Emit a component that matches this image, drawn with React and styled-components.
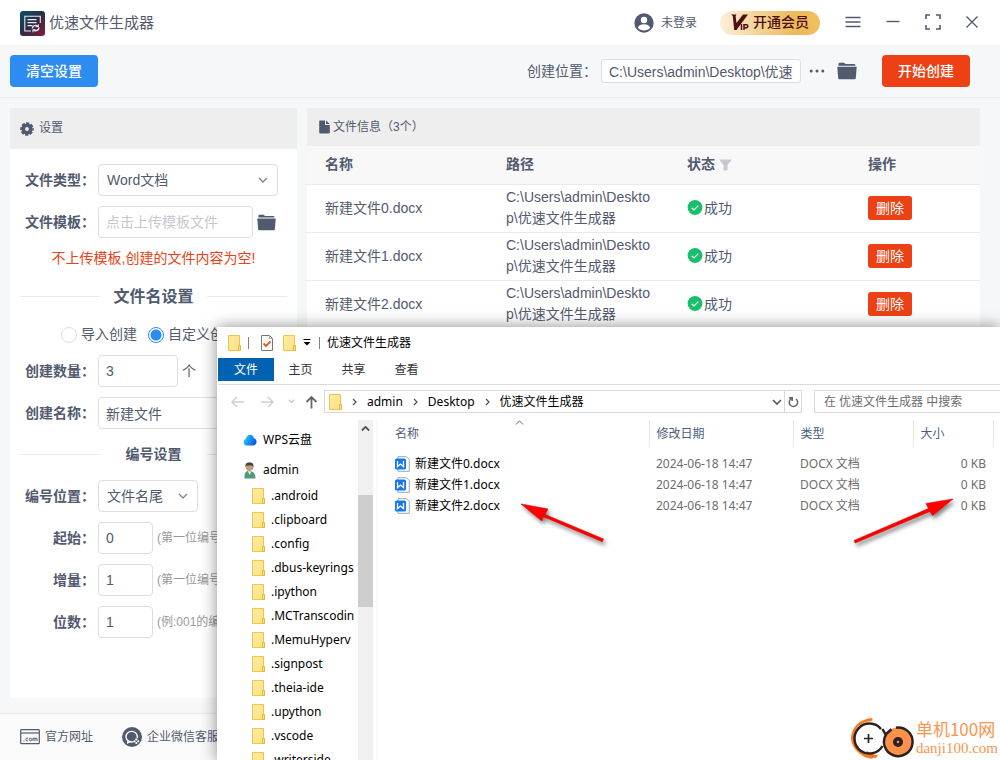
import React from "react";
import styled, { createGlobalStyle } from "styled-components";

const GlobalStyle = createGlobalStyle`
  *, *::before, *::after { box-sizing: border-box; }
  body {
    margin: 0;
    background: #f5f7f9;
    color: #515a6e;
    font: 14px/21px "Liberation Sans", "Noto Sans CJK SC", sans-serif;
  }
  button, input, select { font: inherit; color: inherit; margin: 0; }
  button { border: 0; padding: 0; background: none; cursor: pointer; }
  svg { display: block; flex: none; }
`;

/* ---------- application shell ---------- */

const Desktop = styled.div`
  position: relative;
  display: flex;
  flex-direction: column;
  min-height: 100vh;
  overflow: hidden;
`;

const TitleBar = styled.header`
  display: flex;
  align-items: center;
  height: 45px;
  padding: 0 22px 0 20px;
  background: #fff;
`;

const Brand = styled.div`
  display: flex;
  align-items: center;
  gap: 4px;
  margin-right: auto;
  padding-top: 2px;
`;

const BrandName = styled.h1`
  margin: 0;
  padding-bottom: 2px;
  font-size: 15px;
  line-height: 24px;
  font-weight: 400;
`;

const LoginButton = styled.button`
  display: flex;
  align-items: center;
  gap: 7px;
  margin-right: 23px;
  font-size: 12px;
  line-height: 24px;
`;

const VipButton = styled.button`
  display: flex;
  align-items: center;
  gap: 4px;
  width: 100px;
  height: 24px;
  padding-left: 11px;
  margin-right: 25px;
  border-radius: 12px;
  background: linear-gradient(90deg, #fbefdb, #f2cf8a 45%, #edb959 75%, #f0c060);
  color: #4d0f12;
  font-size: 14px;
  font-weight: 500;
  white-space: nowrap;
`;

const WindowActions = styled.div`
  display: flex;
  align-items: center;
  gap: 25px;
`;

const IconButton = styled.button`
  display: flex;
  align-items: center;
  justify-content: center;
  flex: none;
`;

const HistoryButton = styled(IconButton)`
  margin-left: auto;
`;

const Toolbar = styled.div`
  display: flex;
  align-items: center;
  height: 53px;
  padding: 0 30px 0 10px;
  border-bottom: 1px solid #e8eaec;
  background: #f5f7f9;
`;

const ActionButton = styled.button`
  width: 88px;
  height: 32px;
  border-radius: 4px;
  background: ${(p) => (p.$danger ? "#ed4014" : "#2d8cf0")};
  color: #fff;
  font-weight: 500;
`;

const PathGroup = styled.div`
  display: flex;
  align-items: center;
  margin-left: auto;
  margin-right: 25px;
`;

const PathInput = styled.input`
  width: 200px;
  height: 24px;
  margin: 0 8px 0 4px;
  padding: 0 7px;
  border: 1px solid #dcdee2;
  border-radius: 3px;
  background: #fff;
  outline: 0;
`;

const Main = styled.main`
  display: flex;
  flex: 1;
  gap: 10px;
  padding: 10px 20px 15px 10px;
`;

const Panel = styled.section`
  flex: ${(p) => (p.$side ? "0 0 287px" : "1 1 0")};
  min-width: 0;
  background: #fff;
`;

const PanelHeader = styled.h2`
  display: flex;
  align-items: center;
  gap: ${(p) => (p.$tall ? "5px" : "3px")};
  height: ${(p) => (p.$tall ? "41px" : "38px")};
  margin: 0;
  padding: 0 ${(p) => (p.$tall ? "10px" : "12px")};
  background: #eee;
  font-size: 12px;
  font-weight: 400;
`;

/* ---------- settings form ---------- */

const Form = styled.form`
  display: flex;
  flex-direction: column;
  gap: 10px;
  padding: 15px 10px;
`;

const Field = styled.div`
  display: flex;
  align-items: center;
  height: 32px;
`;

const FieldLabel = styled.label`
  flex: none;
  width: 75px;
  margin-right: 3px;
  text-align: right;
  font-weight: 700;
`;

const TextInput = styled.input`
  width: ${(p) => p.$width}px;
  height: 32px;
  padding: 0 7px;
  border: 1px solid #dcdee2;
  border-radius: 4px;
  background: #fff;
  outline: 0;
  &::placeholder { color: #c5c8ce; opacity: 1; }
`;

const SelectBox = styled.div`
  position: relative;
  width: ${(p) => p.$width}px;
  svg { position: absolute; right: 10px; top: 13px; pointer-events: none; }
`;

const Select = styled.select`
  width: 100%;
  height: 32px;
  padding: 0 8px;
  border: 1px solid #dcdee2;
  border-radius: 4px;
  background: #fff;
  appearance: none;
`;

const After = styled.span`
  margin-left: 4px;
  white-space: nowrap;
`;

const Hint = styled.span`
  margin-left: 4px;
  color: #999;
  font-size: 12px;
  white-space: nowrap;
`;

const Warning = styled.p`
  margin: 0;
  height: 20px;
  line-height: 20px;
  text-align: center;
  color: #ed4014;
`;

const Divider = styled.h3`
  display: flex;
  align-items: center;
  justify-content: space-between;
  height: ${(p) => (p.$large ? "36px" : "31px")};
  margin: 0;
  font-size: ${(p) => (p.$large ? "16px" : "14px")};
  font-weight: 700;
  &::before, &::after { content: ""; width: 80px; height: 1px; background: #e8eaec; }
`;

const RadioRow = styled.div`
  display: flex;
  align-items: center;
  gap: 11px;
  height: 21px;
  padding-left: 41px;
  white-space: nowrap;
`;

const RadioLabel = styled.label`
  display: flex;
  align-items: center;
  gap: 4px;
`;

const Radio = styled.input`
  appearance: none;
  width: 16px;
  height: 16px;
  border: 1px solid #dcdee2;
  border-radius: 50%;
  background: #fff;
  &:checked {
    border-color: #2d8cf0;
    background: radial-gradient(circle, #2d8cf0 5px, #fff 6px);
  }
`;

/* ---------- file information table ---------- */

const InfoTable = styled.table`
  width: 100%;
  table-layout: fixed;
  border-collapse: collapse;
  th, td { padding: 0 18px; text-align: left; border-bottom: 1px solid #e8eaec; }
  th { height: 38px; background: #f8f8f9; font-weight: 700; }
  td { height: 48px; word-break: break-all; }
`;

const InfoColumn = styled.col`
  width: ${(p) => (p.$rest ? "auto" : "181px")};
`;

const Inline = styled.span`
  display: flex;
  align-items: center;
  gap: ${(p) => p.$gap || 1}px;
`;

const DeleteButton = styled.button`
  width: 44px;
  height: 24px;
  border-radius: 3px;
  background: #ed4014;
  color: #fff;
`;

const Footer = styled.footer`
  display: flex;
  align-items: center;
  gap: 29px;
  height: 47px;
  padding: 0 20px;
  border-top: 1px solid #e8eaec;
  background: #fafafa;
`;

const FooterLink = styled.a`
  display: flex;
  align-items: center;
  gap: 5px;
  color: inherit;
  font-size: 12px;
  text-decoration: none;
`;

/* ---------- explorer window ---------- */

const Explorer = styled.section`
  position: absolute;
  left: 217px;
  top: 327px;
  right: 0;
  bottom: 0;
  display: flex;
  flex-direction: column;
  padding-left: 1px;
  overflow: hidden;
  background: #fff;
  box-shadow: 0 0 15px rgba(0, 0, 0, 0.45);
  color: #000;
  font: 12px/18px "Noto Sans", "Noto Sans CJK SC", sans-serif;
`;

const Caption = styled.div`
  display: flex;
  align-items: center;
  flex: none;
  gap: 7px;
  height: 31px;
  padding-left: 10px;
`;

const CaptionBar = styled.span`
  width: 1px;
  height: 12px;
  background: #808080;
`;

const CaptionTools = styled.span`
  display: flex;
  align-items: center;
  gap: ${(p) => (p.$wide ? "10px" : "8px")};
  padding-left: ${(p) => (p.$wide ? "5px" : "0")};
`;

const Tabs = styled.nav`
  display: flex;
  flex: none;
  height: 27px;
  padding-bottom: 3px;
  border-bottom: 1px solid #dadbdc;
`;

const Tab = styled.button`
  width: ${(p) => (p.$active ? "56px" : "53px")};
  height: 23px;
  padding-top: 1px;
  background: ${(p) => (p.$active ? "#0063b1" : "transparent")};
  color: ${(p) => (p.$active ? "#fff" : "#333")};
`;

const AddressRow = styled.div`
  display: flex;
  align-items: center;
  flex: none;
  height: 33px;
  margin-bottom: 2px;
  padding-left: 6px;
`;

const NavButtons = styled.div`
  display: grid;
  grid-template-columns: 26px 34px 14px 26px;
  align-items: center;
`;

const AddressBox = styled.div`
  display: flex;
  align-items: center;
  flex: 1;
  height: 23px;
  padding-left: 4px;
  margin-right: 12px;
  border: 1px solid #d9d9d9;
`;

const Crumb = styled.button`
  white-space: nowrap;
`;

const CrumbArrow = styled.span`
  display: flex;
  justify-content: center;
  width: 25px;
`;

const RefreshButton = styled.button`
  display: flex;
  align-items: center;
  justify-content: center;
  width: 17px;
  height: 21px;
  margin-left: 2px;
  border-left: 1px solid #d9d9d9;
`;

const SearchInput = styled.input`
  width: 186px;
  height: 23px;
  padding: 0 9px;
  border: 1px solid #d9d9d9;
  border-right: 0;
  background: #fff;
  outline: 0;
  &::placeholder { color: #6d6d6d; opacity: 1; }
`;

const ExplorerBody = styled.div`
  display: flex;
  flex: 1;
  min-height: 0;
`;

const Tree = styled.ul`
  flex: 0 0 140px;
  margin: 0;
  padding: 4px 0 0;
  overflow: hidden;
  list-style: none;
`;

const TreeItem = styled.li`
  display: flex;
  align-items: center;
  gap: 6px;
  height: ${(p) => p.$height || 24}px;
  padding-left: ${(p) => (p.$height ? "25px" : "34px")};
  white-space: nowrap;
`;

const ScrollTrack = styled.div`
  display: flex;
  flex-direction: column;
  flex: 0 0 15px;
  gap: 57px;
  background: #f0f0f0;
`;

const ScrollUp = styled.button`
  display: flex;
  align-items: center;
  justify-content: center;
  height: 18px;
`;

const ScrollThumb = styled.div`
  height: 112px;
  background: #cdcdcd;
`;

const FileArea = styled.div`
  position: relative;
  flex: 1;
  margin-left: 3px;
  border-left: 1px solid #f5f5f5;
`;

const SortMark = styled.span`
  position: absolute;
  left: 138px;
  top: 0;
`;

const FileTable = styled.table`
  width: 100%;
  table-layout: fixed;
  border-collapse: collapse;
  th, td { padding: 0 0 0 7px; text-align: left; white-space: nowrap; }
  th { height: 27px; color: #4c607a; font-weight: 400; border-right: 1px solid #e5e5e5; }
  th:first-child, td:first-child { padding-left: 18px; }
  th:last-child { border-right: 0; }
  td { height: 21px; color: #6d6d6d; }
  td:first-child { color: #000; }
  tbody::before { content: ""; display: table-row; height: 6px; }
`;

const FileColumn = styled.col`
  width: ${(p) => (p.$width ? `${p.$width}px` : "auto")};
`;

const SizeCell = styled.td`
  && { padding-right: 7px; text-align: right; }
`;

/* ---------- overlays ---------- */

const Pointer = styled.svg`
  position: absolute;
  left: ${(p) => p.$left}px;
  top: ${(p) => p.$top}px;
  overflow: visible;
  filter: drop-shadow(2px 3px 2px rgba(0, 0, 0, 0.5));
`;

const SiteMark = styled.div`
  position: absolute;
  right: 2px;
  bottom: 0;
  display: flex;
  align-items: center;
  gap: 2px;
  color: #fd9350;
`;

const SiteText = styled.div`
  display: flex;
  flex-direction: column;
  font: 400 17px/20px "Noto Sans CJK SC", sans-serif;
  small { font: 15px/18px "Liberation Serif", serif; }
`;

/* ---------- icons ---------- */

const ink = "#515a6e";

const LogoIcon = () => (
  <svg width="25" height="25" viewBox="0 0 25 25">
    <defs>
      <linearGradient id="logo" x1="0" y1="0" x2="1" y2="1">
        <stop offset="0" stopColor="#0b5368" />
        <stop offset="0.5" stopColor="#2a2c45" />
        <stop offset="1" stopColor="#8b1c3c" />
      </linearGradient>
    </defs>
    <rect width="25" height="25" rx="3" fill="url(#logo)" />
    <g fill="none" stroke="#e8e9ee" strokeWidth="1.1">
      <path d="M20.300 12V5.300H4.800V20H11M7.500 8.600h9M7.500 11.600h9M7.500 14.600h5" />
      <path d="M12.300 17.500a3.400 3.400 0 0 1 5.500-2.300M19 16.500a3.400 3.400 0 0 1-5.300 2.700" strokeWidth="1.400" />
      <path d="M18.300 13.200v2.500h-2.500M13 21.300v-2.600h2.500" />
    </g>
  </svg>
);

const UserIcon = () => (
  <svg width="20" height="20" viewBox="0 0 20 20">
    <circle cx="10" cy="10" r="9.700" fill={ink} />
    <circle cx="10" cy="7" r="3.200" fill="#fff" />
    <path d="M3.800 14.700c1.500-4.600 10.900-4.600 12.400 0-3 3.700-9.400 3.700-12.400 0z" fill="#fff" />
  </svg>
);

const VipIcon = () => (
  <svg width="18" height="17" viewBox="0 0 18 17" fill="none" stroke="#4d0f12">
    <path d="M0 .5h5.500L4.600 2l.9 7L12 .5h5L5.500 16H3.200L1.800 2z" fill="#4d0f12" stroke="none" />
    <path d="M10.500 10v6M13 16v-5.300h2.300a1.500 1.500 0 0 1 0 3H13" strokeWidth="1.500" />
  </svg>
);

const MenuIcon = () => (
  <svg width="16" height="14" viewBox="0 0 16 14" stroke={ink} strokeWidth="1.500">
    <path d="M0.500 1.500h15M0.500 6h15M0.500 10.500h15" />
  </svg>
);

const MinusIcon = () => (
  <svg width="14" height="14" viewBox="0 0 14 14" stroke={ink} strokeWidth="1.400">
    <path d="M0.500 5.500h13" />
  </svg>
);

const FullIcon = () => (
  <svg width="16" height="18" viewBox="0 0 16 18" fill="none" stroke={ink} strokeWidth="1.600">
    <path d="M1 5V1h4M11 1h4v4M15 11v4h-4M5 15H1v-4" />
  </svg>
);

const CloseIcon = () => (
  <svg width="12" height="14" viewBox="0 0 12 14" stroke={ink} strokeWidth="1.400">
    <path d="M.5.500l11 11M11.500.500l-11 11" />
  </svg>
);

const DotsIcon = () => (
  <svg width="16" height="4" viewBox="0 0 16 4" fill={ink}>
    <circle cx="2.200" cy="2" r="1.500" />
    <circle cx="8" cy="2" r="1.500" />
    <circle cx="13.800" cy="2" r="1.500" />
  </svg>
);

const SolidFolder = ({ width = 20, height = 18 }) => (
  <svg width={width} height={height} viewBox="0 0 20 18" fill={ink} preserveAspectRatio="none">
    <path d="M1.500 3.200V2Q1.500.800 2.700.800H7l1.500 1.200h8.700q1.200 0 1.200 1.200v.6H1.500z" />
    <path d="M.3 4.800h19.400l-.9 11.400q-.1 1-1.200 1H2.300q-1 0-1.100-1z" />
  </svg>
);

const GearIcon = () => (
  <svg width="14" height="14" viewBox="0 0 14 14" fill="none" stroke={ink}>
    <circle cx="7" cy="7" r="3.700" strokeWidth="3.600" />
    <circle cx="7" cy="7" r="5.700" strokeWidth="2.200" strokeDasharray="3.100 1.377" strokeDashoffset="1.550" />
  </svg>
);

const PageIcon = () => (
  <svg width="11" height="14" viewBox="0 0 11 14" fill={ink}>
    <path d="M1 .5h5V5h4.800v7.500q0 1-1 1H1.200q-1 0-1-1v-11Q.2.500 1 .5zM7 .5L10.800 4H7z" />
  </svg>
);

const Chevron = ({ size = 10, color = "#808695", d = "M1 1l4 4 4-4", weight = 1.3 }) => (
  <svg width={size} height={size * 0.6} viewBox="0 0 10 6" fill="none" stroke={color} strokeWidth={weight}>
    <path d={d} />
  </svg>
);

const FilterIcon = () => (
  <svg width="13" height="12" viewBox="0 0 13 12" fill="#c5c8ce">
    <path d="M0 .5h13L8.500 6v5.500h-4V6z" />
  </svg>
);

const OkIcon = () => (
  <svg width="16" height="16" viewBox="0 0 16 16">
    <circle cx="8" cy="7.500" r="7.400" fill="#19be6b" />
    <path d="M4.700 7.800l2.300 2.200 4.300-4.300" fill="none" stroke="#fff" strokeWidth="1.100" />
  </svg>
);

const SiteIcon = () => (
  <svg width="20" height="16" viewBox="0 0 20 16" fill="none" stroke={ink}>
    <rect x=".7" y=".7" width="18.600" height="14" rx=".8" strokeWidth="1.200" />
    <path d="M1 4h18" strokeWidth="1.200" />
    <path d="M3.500 12h1M8 9.300a1.400 1.400 0 1 0 0 2.300M13 12V9M15 12V9.500M17 12V9.500M13 9.300h4" />
    <circle cx="10.500" cy="10.500" r="1.300" />
  </svg>
);

const ServiceIcon = () => (
  <svg width="20" height="20" viewBox="0 0 20 20" fill="none" stroke="#fff">
    <circle cx="10" cy="10" r="10" fill={ink} stroke="none" />
    <path d="M15.200 11a5.700 5.300 0 1 0-3.700 3.700" strokeWidth="1.400" />
    <path d="M6.200 13.300l-.6 2.600 2.700-1.200" strokeWidth="1.200" />
    <g fill="#fff" stroke="none">
      <circle cx="14.300" cy="12.400" r="1.100" />
      <circle cx="16.200" cy="14.300" r="1.100" />
      <circle cx="14.300" cy="16" r="1.100" />
      <circle cx="12.500" cy="14.300" r="1.100" />
    </g>
  </svg>
);

const FolderIcon = () => (
  <svg width="13" height="16" viewBox="0 0 13 16">
    <defs>
      <linearGradient id="folder" x1="0" y1="0" x2="1" y2="1">
        <stop offset="0" stopColor="#ffeaa0" />
        <stop offset="1" stopColor="#ffe184" />
      </linearGradient>
    </defs>
    <path d="M.5.500h11v10h1v5H.5z" fill="url(#folder)" stroke="#ecc64c" />
    <path d="M10.500 15.500v-5h2v5z" fill="#ffe184" stroke="#e4b93c" />
  </svg>
);

const CheckDocIcon = () => (
  <svg width="12" height="16" viewBox="0 0 12 16">
    <path d="M.5.500h8l3 3v12H.5z" fill="#fafafa" stroke="#777" />
    <path d="M8.500.500v3h3" fill="none" stroke="#aaa" />
    <path d="M2.500 8.500L5 11l4.500-4.500" fill="none" stroke="#e8571e" strokeWidth="1.800" />
  </svg>
);

const QuickIcon = () => (
  <svg width="8" height="7" viewBox="0 0 8 7">
    <path d="M.5.500h7" stroke="#000" />
    <path d="M.5 3h7L4 6.500z" />
  </svg>
);

const NavArrow = ({ d, color = "#d0d0d0", weight = 1.5 }) => (
  <svg width="13" height="14" viewBox="0 0 13 14" fill="none" stroke={color} strokeWidth={weight}>
    <path d={d} />
  </svg>
);

const SideArrow = () => (
  <svg width="5" height="8" viewBox="0 0 5 8" fill="none" stroke="#555" strokeWidth="1.300">
    <path d="M1 1l3 3-3 3" />
  </svg>
);

const RefreshIcon = () => (
  <svg width="11" height="12" viewBox="0 0 11 12" fill="none" stroke="#666" strokeWidth="1.500">
    <path d="M3.300 2.700A4.200 4.200 0 1 0 8 3M1 1.800h3.200V5" />
  </svg>
);

const CloudIcon = () => (
  <svg width="14" height="12" viewBox="0 0 14 12">
    <defs>
      <linearGradient id="cloud" x1="0" y1="0.300" x2="1" y2="0.700">
        <stop offset="0" stopColor="#2ad0f5" />
        <stop offset="0.500" stopColor="#168df5" />
        <stop offset="1" stopColor="#0b4fd8" />
      </linearGradient>
    </defs>
    <path d="M3.500 11.500a3.500 3.500 0 0 1-.7-6.700C4 0 9.500-.7 11 4.300a3.700 3.700 0 0 1-.7 7.200z" fill="url(#cloud)" />
  </svg>
);

const PersonIcon = () => (
  <svg width="14" height="17" viewBox="0 0 14 17">
    <path d="M1.500 16.500c-.5-6 1.500-7.500 4.500-7.500 4 0 6.500 2 6.500 7.500z" fill="#4f9a78" />
    <path d="M4.800 9.300h3.400L6.700 13z" fill="#f3f3f3" />
    <circle cx="6.500" cy="5.300" r="3.700" fill="#c69b78" />
    <path d="M2.500 5C2 .5 5 .3 6.800.5c3 0 4.300 2 3.400 5L9 3.500H4z" fill="#45403c" />
  </svg>
);

const WordIcon = () => (
  <svg width="15" height="16" viewBox="0 0 15 16" fill="none">
    <path d="M3 .7h8.500l2.800 2.800v11.800H3z" fill="#fff" stroke="#9aa5b8" />
    <rect y="2.500" width="11" height="11" rx="1.500" fill="#1677f2" />
    <path d="M2.500 5v5.500L5.500 8l3 2.500V5" stroke="#fff" strokeWidth="1.300" />
  </svg>
);

const MarkIcon = () => (
  <svg width="63" height="44" viewBox="0 0 63 44" fill="none">
    <path d="M21 3.500Q4 5 1.200 21q0 9 8 15.500 7 5.500 13 4.500" stroke="#ff7a1a" strokeWidth="2.500" />
    <path d="M10 7Q16 1 22 2.500l-2 3q-5-1-9 2z" fill="#ff7a1a" />
    <path d="M13 37q5 5 12 5l2-3q-6 0-11-4z" fill="#ff7a1a" />
    <path d="M30 13A15 15 0 1 0 31.500 30" stroke="#2b2226" strokeWidth="2.500" />
    <path d="M13 22.500h9M17.500 18v9" stroke="#2b2226" strokeWidth="1.700" />
    <circle cx="47" cy="26" r="14.500" fill="#ff9248" />
    <path d="M45 11.700a14.300 14.300 0 1 1-9.500 6l5-4.500M31.500 13l3 5.500" stroke="#2b2226" strokeWidth="2.500" />
    <circle cx="47" cy="26" r="5" fill="#2b2226" />
    <circle cx="47" cy="26" r="1.300" fill="#ff9248" />
  </svg>
);

/* ---------- data ---------- */

const files = ["新建文件0.docx", "新建文件1.docx", "新建文件2.docx"];

const folders = [
  ".android", ".clipboard", ".config", ".dbus-keyrings", ".ipython",
  ".MCTranscodin", ".MemuHyperv", ".signpost", ".theia-ide", ".upython",
  ".vscode", ".writerside",
];

const numbering = [
  { id: "start", label: "起始：", value: "0", hint: "(第一位编号)" },
  { id: "step", label: "增量：", value: "1", hint: "(第一位编号)" },
  { id: "digits", label: "位数：", value: "1", hint: "(例:001的编号)" },
];

/* ---------- views ---------- */

const SettingsPanel = () => (
  <Panel $side>
    <PanelHeader $tall><GearIcon />设置</PanelHeader>
    <Form onSubmit={(e) => e.preventDefault()}>
      <Field>
        <FieldLabel htmlFor="type">文件类型：</FieldLabel>
        <SelectBox $width={180}>
          <Select id="type"><option>Word文档</option></Select>
          <Chevron />
        </SelectBox>
      </Field>
      <Field>
        <FieldLabel htmlFor="template">文件模板：</FieldLabel>
        <TextInput id="template" $width={155} placeholder="点击上传模板文件" />
        <After><IconButton type="button" aria-label="选择模板"><SolidFolder width={19} height={17} /></IconButton></After>
      </Field>
      <Warning>不上传模板,创建的文件内容为空!</Warning>
      <Divider $large>文件名设置</Divider>
      <RadioRow>
        <RadioLabel><Radio type="radio" name="mode" />导入创建</RadioLabel>
        <RadioLabel><Radio type="radio" name="mode" defaultChecked />自定义创建</RadioLabel>
      </RadioRow>
      <Field>
        <FieldLabel htmlFor="count">创建数量：</FieldLabel>
        <TextInput id="count" $width={80} defaultValue="3" />
        <After>个</After>
      </Field>
      <Field>
        <FieldLabel htmlFor="name">创建名称：</FieldLabel>
        <TextInput id="name" $width={180} defaultValue="新建文件" />
      </Field>
      <Divider>编号设置</Divider>
      <Field>
        <FieldLabel htmlFor="position">编号位置：</FieldLabel>
        <SelectBox $width={100}>
          <Select id="position"><option>文件名尾</option></Select>
          <Chevron />
        </SelectBox>
      </Field>
      {numbering.map((n) => (
        <Field key={n.id}>
          <FieldLabel htmlFor={n.id}>{n.label}</FieldLabel>
          <TextInput id={n.id} $width={55} defaultValue={n.value} />
          <Hint>{n.hint}</Hint>
        </Field>
      ))}
    </Form>
  </Panel>
);

const FilesPanel = () => (
  <Panel>
    <PanelHeader><PageIcon />文件信息（3个）</PanelHeader>
    <InfoTable>
      <colgroup><InfoColumn /><InfoColumn /><InfoColumn /><InfoColumn $rest /></colgroup>
      <thead>
        <tr>
          <th>名称</th>
          <th>路径</th>
          <th><Inline $gap={4}>状态<FilterIcon /></Inline></th>
          <th>操作</th>
        </tr>
      </thead>
      <tbody>
        {files.map((name) => (
          <tr key={name}>
            <td>{name}</td>
            <td>C:\Users\admin\Desktop\优速文件生成器</td>
            <td><Inline><OkIcon />成功</Inline></td>
            <td><DeleteButton type="button">删除</DeleteButton></td>
          </tr>
        ))}
      </tbody>
    </InfoTable>
  </Panel>
);

const ExplorerWindow = () => (
  <Explorer aria-label="优速文件生成器">
    <Caption>
      <FolderIcon />
      <CaptionBar />
      <CaptionTools $wide><CheckDocIcon /><FolderIcon /></CaptionTools>
      <CaptionTools><QuickIcon /><CaptionBar /></CaptionTools>
      <span>优速文件生成器</span>
    </Caption>
    <Tabs>
      <Tab $active>文件</Tab>
      <Tab>主页</Tab>
      <Tab>共享</Tab>
      <Tab>查看</Tab>
    </Tabs>
    <AddressRow>
      <NavButtons>
        <IconButton aria-label="后退"><NavArrow d="M13 7H1M6 2L1 7l5 5" /></IconButton>
        <IconButton aria-label="前进"><NavArrow d="M0 7h12M7 2l5 5-5 5" /></IconButton>
        <IconButton aria-label="最近"><Chevron size={7} color="#ccc" weight={2} /></IconButton>
        <IconButton aria-label="上移"><NavArrow d="M6.500 13.500V2M1.500 7l5-5 5 5" color="#666" weight={1.8} /></IconButton>
      </NavButtons>
      <AddressBox>
        <FolderIcon />
        <CrumbArrow><SideArrow /></CrumbArrow>
        <Crumb>admin</Crumb>
        <CrumbArrow><SideArrow /></CrumbArrow>
        <Crumb>Desktop</Crumb>
        <CrumbArrow><SideArrow /></CrumbArrow>
        <Crumb>优速文件生成器</Crumb>
        <HistoryButton aria-label="历史"><Chevron color="#555" weight={1.6} /></HistoryButton>
        <RefreshButton aria-label="刷新"><RefreshIcon /></RefreshButton>
      </AddressBox>
      <SearchInput aria-label="搜索" placeholder="在 优速文件生成器 中搜索" />
    </AddressRow>
    <ExplorerBody>
      <Tree>
        <TreeItem $height={32}><CloudIcon />WPS云盘</TreeItem>
        <TreeItem $height={28}><PersonIcon />admin</TreeItem>
        {folders.map((f) => <TreeItem key={f}><FolderIcon />{f}</TreeItem>)}
      </Tree>
      <ScrollTrack>
        <ScrollUp aria-label="向上滚动"><Chevron size={9} color="#505050" d="M1 5l4-4 4 4" weight={2} /></ScrollUp>
        <ScrollThumb />
      </ScrollTrack>
      <FileArea>
        <SortMark><Chevron size={9} color="#555" d="M1 5l4-4 4 4" weight={1} /></SortMark>
        <FileTable>
          <colgroup>
            <FileColumn />
            <FileColumn $width={144} />
            <FileColumn $width={120} />
            <FileColumn $width={80} />
            <FileColumn $width={7} />
          </colgroup>
          <thead>
            <tr><th>名称</th><th>修改日期</th><th>类型</th><th>大小</th><th aria-hidden="true" /></tr>
          </thead>
          <tbody>
            {files.map((name) => (
              <tr key={name}>
                <td><Inline $gap={5}><WordIcon />{name}</Inline></td>
                <td>2024-06-18 14:47</td>
                <td>DOCX 文档</td>
                <SizeCell>0 KB</SizeCell>
                <td />
              </tr>
            ))}
          </tbody>
        </FileTable>
      </FileArea>
    </ExplorerBody>
  </Explorer>
);

export default function App() {
  return (
    <Desktop>
      <GlobalStyle />
      <TitleBar>
        <Brand><LogoIcon /><BrandName>优速文件生成器</BrandName></Brand>
        <LoginButton><UserIcon />未登录</LoginButton>
        <VipButton><VipIcon />开通会员</VipButton>
        <WindowActions>
          <IconButton aria-label="菜单"><MenuIcon /></IconButton>
          <IconButton aria-label="最小化"><MinusIcon /></IconButton>
          <IconButton aria-label="最大化"><FullIcon /></IconButton>
          <IconButton aria-label="关闭"><CloseIcon /></IconButton>
        </WindowActions>
      </TitleBar>
      <Toolbar>
        <ActionButton>清空设置</ActionButton>
        <PathGroup>
          <label htmlFor="path">创建位置：</label>
          <PathInput id="path" defaultValue="C:\Users\admin\Desktop\优速文件生成器" />
          <Inline $gap={12}>
            <IconButton aria-label="更多"><DotsIcon /></IconButton>
            <IconButton aria-label="打开文件夹"><SolidFolder /></IconButton>
          </Inline>
        </PathGroup>
        <ActionButton $danger>开始创建</ActionButton>
      </Toolbar>
      <Main>
        <SettingsPanel />
        <FilesPanel />
      </Main>
      <Footer>
        <FooterLink href="#site"><SiteIcon />官方网址</FooterLink>
        <FooterLink href="#service"><ServiceIcon />企业微信客服</FooterLink>
      </Footer>
      <ExplorerWindow />
      <Pointer $left={521} $top={504} width="84" height="40" viewBox="0 0 84 40">
        <path d="M0 0l27 5-3 5.500L82.500 35l-1.200 2.700L22 12.500 21 17z" fill="#f00" stroke="#e00000" strokeWidth=".6" />
      </Pointer>
      <Pointer $left={853} $top={499} width="102" height="46" viewBox="0 0 102 46">
        <path d="M100 0L73 4.500l2.500 5L1 41.500 2.200 44 77 12.500l2.500 4z" fill="#f00" stroke="#e00000" strokeWidth=".6" />
      </Pointer>
      <SiteMark>
        <MarkIcon />
        <SiteText><span>单机100网</span><small>danji100.com</small></SiteText>
      </SiteMark>
    </Desktop>
  );
}
